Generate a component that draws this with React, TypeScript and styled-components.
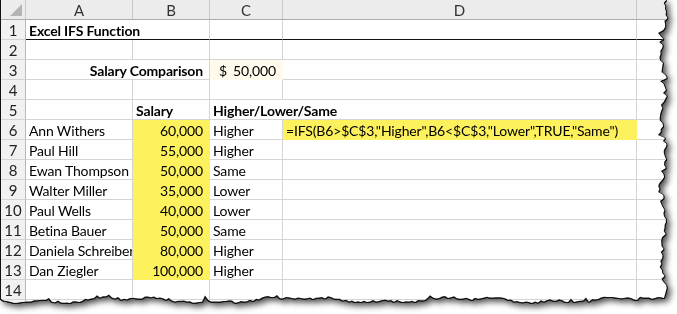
import React from 'react';
import styled, { createGlobalStyle, css } from 'styled-components';

const GlobalStyle = createGlobalStyle`
  html, body {
    margin: 0;
    padding: 0;
    background: #fff;
    overflow: hidden;
  }
  body {
    font-family: Lato, 'Open Sans', sans-serif;
  }
`;

// small seeded PRNG so the torn edge is the same on every render
const mulberry32 = (seed: number) => () => {
  seed |= 0;
  seed = (seed + 0x6d2b79f5) | 0;
  let t = Math.imul(seed ^ (seed >>> 15), 1 | seed);
  t = (t + Math.imul(t ^ (t >>> 7), 61 | t)) ^ t;
  return ((t ^ (t >>> 14)) >>> 0) / 4294967296;
};

const tornEdge = (() => {
  const rnd = mulberry32(42);
  const pts: string[] = ['0px 0px', '665px 0px'];
  for (let y = 3; y <= 290; y += 3) {
    const spike = rnd() < 0.12 ? -5 * rnd() : 0;
    const x = 662 + 2.5 * Math.sin(y / 11) + (rnd() - 0.5) * 5 + spike;
    pts.push(`${x.toFixed(1)}px ${y}px`);
  }
  for (let x = 663; x >= 0; x -= 3) {
    const bump = rnd() < 0.1 ? -4 * rnd() : 0;
    const y =
      299.5 + 2 * Math.sin(x / 27) + 1.3 * Math.sin(x / 9) + (rnd() - 0.5) * 2.5 + bump;
    pts.push(`${x}px ${y.toFixed(1)}px`);
  }
  pts.push('0px 295px');
  return `polygon(${pts.join(', ')})`;
})();

const Page = styled.div`
  padding-left: 1px;
  filter: drop-shadow(1px 0 0 #111) drop-shadow(-1px 0 0 #111) drop-shadow(0 1px 0 #111)
    drop-shadow(3px 3px 3px rgba(0, 0, 0, 0.7));
`;

const Sheet = styled.div`
  display: grid;
  grid-template-columns: 25px 107px 77px 73px 354px 60px;
  grid-auto-rows: 20px;
  width: 696px;
  background: #fff;
  clip-path: ${tornEdge};
  font-size: 14px;
  letter-spacing: -0.15px;
  color: #000;
`;

const Corner = styled.div`
  position: relative;
  background: #ececec;
  border-right: 1px solid #c8c8c8;
  border-bottom: 1px solid #ababab;
  box-sizing: border-box;

  &::after {
    content: '';
    position: absolute;
    right: 3px;
    bottom: 3px;
    border-style: solid;
    border-width: 0 0 12px 12px;
    border-color: transparent transparent #b4b4b4 transparent;
  }
`;

const ColHead = styled.div`
  display: flex;
  align-items: center;
  justify-content: center;
  padding-top: 1px;
  background: #ececec;
  color: #333;
  font-size: 15px;
  letter-spacing: 0;
  border-right: 1px solid #c8c8c8;
  border-bottom: 1px solid #ababab;
  box-sizing: border-box;
`;

const RowHead = styled.div`
  display: flex;
  align-items: center;
  justify-content: center;
  padding-top: 1px;
  background: #f1f1f1;
  color: #222;
  font-size: 15px;
  letter-spacing: 0;
  border-right: 1px solid #b8b8b8;
  border-bottom: 1px solid #d4d4d4;
  box-sizing: border-box;
`;

type CellProps = {
  $span?: number;
  $align?: 'left' | 'right';
  $bold?: boolean;
  $fill?: string;
  $rule?: boolean;
};

const Cell = styled.div<CellProps>`
  display: flex;
  align-items: center;
  justify-content: ${p => (p.$align === 'right' ? 'flex-end' : 'flex-start')};
  padding: 1px ${p => (p.$align === 'right' ? '6px' : '0')} 0 3px;
  box-sizing: border-box;
  white-space: nowrap;
  overflow: hidden;
  border-right: 1px solid ${p => p.$fill ?? '#d4d4d4'};
  border-bottom: 1px solid ${p => (p.$rule ? '#111' : p.$fill ?? '#d4d4d4')};
  font-weight: ${p => (p.$bold ? 700 : 400)};
  ${p => p.$span && css`grid-column: span ${p.$span};`}
  ${p => p.$fill && css`background: ${p.$fill};`}
`;

const Currency = styled(Cell)`
  && {
    justify-content: space-between;
    padding: 1px 6px 0 9px;
  }
`;

const YELLOW = '#fdf15d';
const CREAM = '#fffaec';

const people: [string, string, string][] = [
  ['Ann Withers', '60,000', 'Higher'],
  ['Paul Hill', '55,000', 'Higher'],
  ['Ewan Thompson', '50,000', 'Same'],
  ['Walter Miller', '35,000', 'Lower'],
  ['Paul Wells', '40,000', 'Lower'],
  ['Betina Bauer', '50,000', 'Same'],
  ['Daniela Schreiber', '80,000', 'Higher'],
  ['Dan Ziegler', '100,000', 'Higher'],
];

const formula = '=IFS(B6>$C$3,"Higher",B6<$C$3,"Lower",TRUE,"Same")';

// a blank sheet row; the label is left off for the row that the torn edge cuts away
const EmptyRow: React.FC<{ n?: number }> = ({ n }) => (
  <>
    <RowHead>{n}</RowHead>
    {[0, 1, 2, 3, 4].map(i => (
      <Cell key={i} />
    ))}
  </>
);

const App: React.FC = () => {
  return (
    <>
      <GlobalStyle />
      <Page>
        <Sheet>
          <Corner />
          {['A', 'B', 'C', 'D', ''].map(c => (
            <ColHead key={c || 'E'}>{c}</ColHead>
          ))}

          <RowHead>1</RowHead>
          <Cell $span={2} $bold $rule>
            Excel IFS Function
          </Cell>
          <Cell $rule />
          <Cell $rule />
          <Cell $rule />

          <EmptyRow n={2} />

          <RowHead>3</RowHead>
          <Cell $span={2} $align="right" $bold>
            Salary Comparison
          </Cell>
          <Currency $fill={CREAM}>
            <span>$</span>
            <span>50,000</span>
          </Currency>
          <Cell />
          <Cell />

          <EmptyRow n={4} />

          <RowHead>5</RowHead>
          <Cell />
          <Cell $bold>Salary</Cell>
          <Cell $span={2} $bold>
            Higher/Lower/Same
          </Cell>
          <Cell />

          {people.map(([name, salary, result], i) => (
            <React.Fragment key={name}>
              <RowHead>{i + 6}</RowHead>
              <Cell>{name}</Cell>
              <Cell $align="right" $fill={YELLOW}>
                {salary}
              </Cell>
              <Cell>{result}</Cell>
              {i === 0 ? <Cell $fill={YELLOW}>{formula}</Cell> : <Cell />}
              <Cell />
            </React.Fragment>
          ))}

          <EmptyRow n={14} />
          <EmptyRow />
        </Sheet>
      </Page>
    </>
  );
};

export default App;
